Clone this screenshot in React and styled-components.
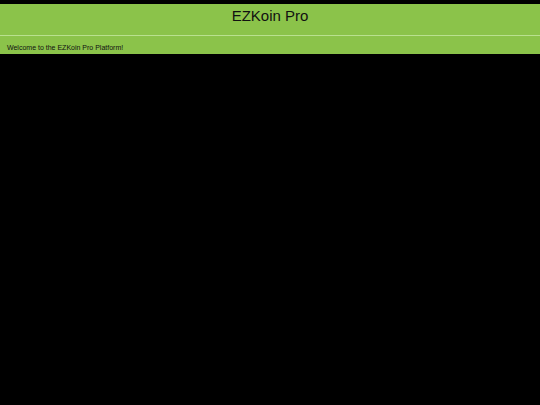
import React from "react";
import styled, { createGlobalStyle } from "styled-components";

const GlobalStyle = createGlobalStyle`
  html, body {
    margin: 0;
    padding: 0;
    background: #000;
    font-family: "Liberation Sans", Arial, sans-serif;
  }
`;

const Page = styled.div`
  padding-top: 4px;
  min-height: 100vh;
  box-sizing: border-box;
  background: #000;
`;

const Header = styled.header`
  background: #8bc34a;
`;

const TitleBar = styled.div`
  height: 31px;
  display: flex;
  justify-content: center;
  align-items: flex-start;
  border-bottom: 1px solid #b9e08f;
`;

const Title = styled.h1`
  margin: 0;
  padding-top: 3px;
  font-size: 15px;
  font-weight: normal;
  line-height: 17px;
  color: #111;
`;

const SubBar = styled.div`
  height: 18px;
  display: flex;
  align-items: flex-end;
  padding: 0 7px 2px;
  box-sizing: border-box;
`;

const Welcome = styled.p`
  margin: 0;
  font-size: 7px;
  line-height: 8px;
  color: #111;
`;

const App = () => {
  return (
    <>
      <GlobalStyle />
      <Page>
        <Header>
          <TitleBar>
            <Title>EZKoin Pro</Title>
          </TitleBar>
          <SubBar>
            <Welcome>Welcome to the EZKoin Pro Platform!</Welcome>
          </SubBar>
        </Header>
      </Page>
    </>
  );
};

export default App;
